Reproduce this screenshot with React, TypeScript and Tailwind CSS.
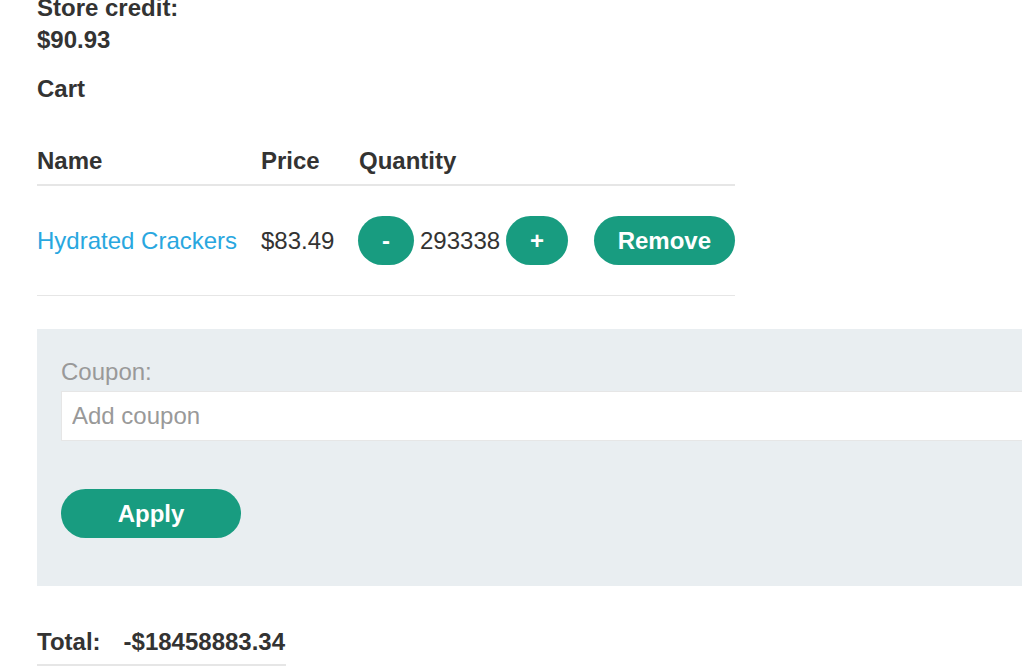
import type { FC } from 'react';

const btn =
    'h-[49px] rounded-full bg-[#189c80] px-6 text-[24px] font-bold leading-none text-white';

const App: FC = () => {
    return (
        <div className="h-screen w-screen overflow-hidden bg-white font-['Liberation_Sans',Arial,sans-serif] text-[#333332]">
            <div className="-mt-[8px] pl-[37px]">
                <p className="text-[24px] font-bold leading-[32px]">Store credit:</p>
                <p className="text-[24px] font-bold leading-[32px]">$90.93</p>
                <h2 className="mt-[17px] text-[24px] font-bold leading-[32px]">Cart</h2>

                <div className="mt-[40px] w-[698px]">
                    <div className="grid grid-cols-[224px_98px_1fr] border-b-2 border-[#e6e6e6] pb-[7px] text-[24px] font-bold leading-[32px]">
                        <span>Name</span>
                        <span>Price</span>
                        <span>Quantity</span>
                    </div>
                    <div className="grid h-[110px] grid-cols-[224px_97px_1fr] items-center border-b border-[#e6e6e6] text-[24px] leading-[32px]">
                        <a href="#" className="text-[#29a7df]">Hydrated Crackers</a>
                        <span>$83.49</span>
                        <div className="flex items-center">
                            <button className={btn}>-</button>
                            <span className="mx-[6px]">293338</span>
                            <button className={btn}>+</button>
                            <button className={`${btn} ml-auto`}>Remove</button>
                        </div>
                    </div>
                </div>

                <div className="mt-[33px] w-[1100px] bg-[#e9eef1] px-[24px] pt-[28px] pb-[48px]">
                    <label className="block text-[24px] leading-[30px] text-[#999999]">Coupon:</label>
                    <input
                        type="text"
                        placeholder="Add coupon"
                        className="mt-[4px] block h-[50px] w-full border border-[#e6e6e6] bg-white px-[10px] text-[24px] text-[#333332] placeholder:text-[#999999] focus:outline-none"
                    />
                    <button className="mt-[48px] h-[49px] w-[180px] rounded-full bg-[#189c80] text-[24px] font-bold leading-none text-white">
                        Apply
                    </button>
                </div>

                <div className="mt-[40px] flex w-[249px] gap-[23px] border-b-2 border-[#e6e6e6] pb-[6px] text-[24px] font-bold leading-[32px]">
                    <span>Total:</span>
                    <span>-$18458883.34</span>
                </div>
            </div>
        </div>
    );
};

export default App;
